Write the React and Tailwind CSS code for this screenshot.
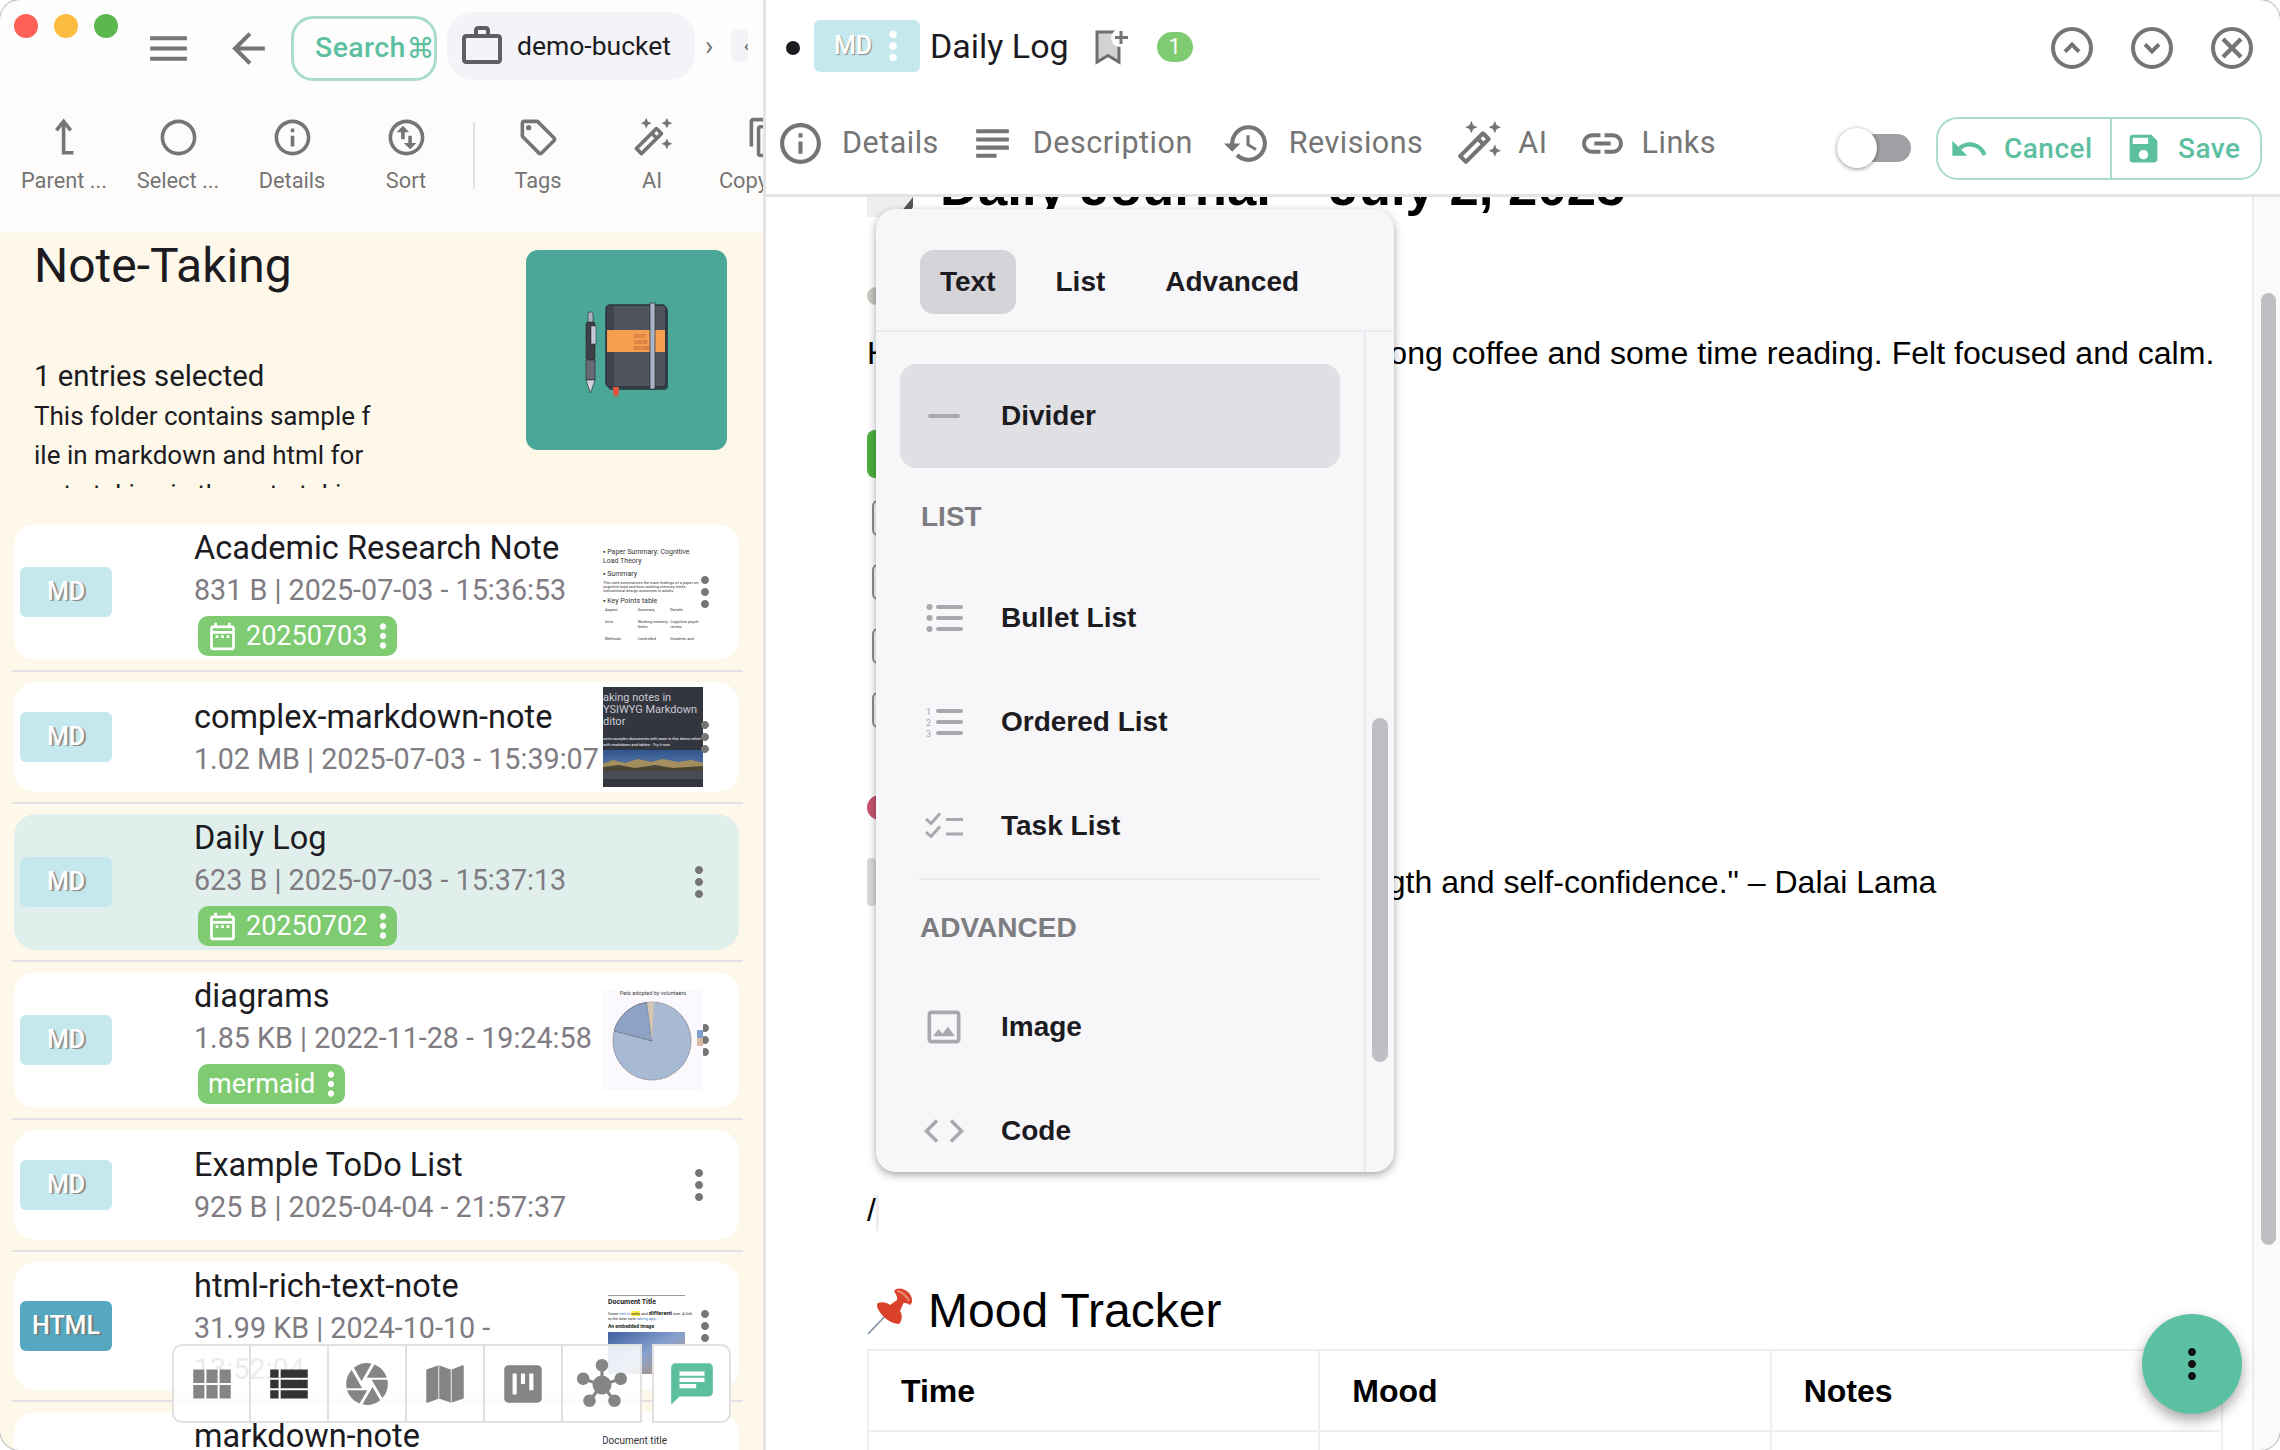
import {
  MdMenu,
  MdArrowBack,
  MdWorkOutline,
  MdRadioButtonUnchecked,
  MdInfoOutline,
  MdOutlineSwapVerticalCircle,
  MdOutlineLocalOffer,
  MdOutlineAutoFixHigh,
  MdContentCopy,
  MdMoreVert,
  MdOutlineDateRange,
  MdViewModule,
  MdViewList,
  MdCamera,
  MdViewKanban,
  MdHub,
  MdChat,
  MdOutlineSubject,
  MdHistory,
  MdLink,
  MdUndo,
  MdSave,
  MdOutlineImage,
} from "react-icons/md";

// little previews on the right of the list rows
function ThumbResearch() {
  return (
    <div className="w-[100px] h-[100px] bg-white overflow-hidden pt-[6px] text-[#333] text-[7px] leading-[9px]">
      <div>▪ Paper Summary: Cognitive Load Theory</div>
      <div className="mt-[4px]">▪ Summary</div>
      <div className="mt-[2px] text-[4px] leading-[4px]">
        This note summarizes the main findings of a paper on cognitive load and how working memory limits
        instructional design outcomes in adults.
      </div>
      <div className="mt-[4px]">▪ Key Points table</div>
      <div className="grid grid-cols-3 gap-y-[7px] mt-[1px] text-[4px] leading-[5px] pl-[2px]">
        <div>Aspect</div>
        <div>Summary</div>
        <div>Details</div>
        <div>Intro</div>
        <div>Working memory limits</div>
        <div>Cognitive psych review</div>
        <div>Methods</div>
        <div>Controlled experiment</div>
        <div>Students and design</div>
        <div>Results</div>
        <div>Reduced load helps</div>
        <div>Test scores rising</div>
      </div>
    </div>
  );
}

function ThumbWysiwyg() {
  return (
    <div className="w-[100px] h-[100px] bg-[#33353f] overflow-hidden text-[#c9cbd3] pt-[5px]">
      <div className="text-[11px] leading-[12px] whitespace-nowrap">aking notes in</div>
      <div className="text-[11px] leading-[12px] whitespace-nowrap">YSIWYG Markdown</div>
      <div className="text-[11px] leading-[12px] whitespace-nowrap">ditor</div>
      <div className="mt-[8px] text-[4px] leading-[6px] whitespace-nowrap text-white">
        write complex documents with ease in this demo editor
      </div>
      <div className="text-[4px] leading-[6px] whitespace-nowrap text-white">with markdown and tables - Try it now</div>
      <svg viewBox="0 0 100 29" className="block w-[100px] h-[29px] mt-[2px]">
        <defs>
          <linearGradient id="sky" x1="0" y1="0" x2="0" y2="1">
            <stop offset="0" stopColor="#2f5590" />
            <stop offset="1" stopColor="#7b8fae" />
          </linearGradient>
        </defs>
        <rect width="100" height="29" fill="url(#sky)" />
        <path d="M0 14 L10 10 L22 13 L35 9 L48 12 L60 9 L75 12 L88 10 L100 13 V22 H0Z" fill="#a58e5e" />
        <path d="M0 17 L16 15 L32 18 L52 15 L70 18 L100 16 V22 H0Z" fill="#4a4636" />
        <rect y="21" width="100" height="8" fill="#484c58" />
      </svg>
    </div>
  );
}

function ThumbPie() {
  return (
    <div className="w-[100px] h-[100px] bg-[#fbf9fd] overflow-hidden relative">
      <div className="text-[5.5px] leading-[7px] text-center text-[#444]">Pets adopted by volunteers</div>
      <svg viewBox="0 0 100 93" className="block w-[100px] h-[93px]">
        <circle cx="49" cy="44" r="39" fill="#a8b9d4" stroke="#333" strokeWidth="0.6" strokeDasharray="1.5 1" />
        <path d="M49 44 L11 34 A39 39 0 0 1 44 5.5Z" fill="#8ea2c6" stroke="#333" strokeWidth="0.6" strokeDasharray="1.5 1" />
        <path d="M49 44 L44 5.5 A39 39 0 0 1 51 5Z" fill="#d5c5b2" />
        <rect x="94" y="33" width="6" height="8" fill="#7f9fd0" />
        <rect x="94" y="41" width="6" height="8" fill="#d5b9a2" />
      </svg>
    </div>
  );
}

function ThumbDoc() {
  return (
    <div className="w-[100px] h-[100px] bg-white overflow-hidden pl-[5px] pr-[18px] pt-[19px] text-[#222]">
      <div className="border-t border-[#999] pt-[2px] text-[7px] leading-[9px] font-bold">Document Title</div>
      <div className="text-[4px] leading-[5px] mt-[3px] whitespace-nowrap">
        Some <span className="text-[#3a78c2]">text in</span> <span className="bg-[#ffe94d]">color</span> and{" "}
        <b className="text-[6px]">different</b> size. A link
      </div>
      <div className="text-[4px] leading-[5px] whitespace-nowrap">
        to the best note <span className="text-[#3a78c2]">taking app.</span>
      </div>
      <div className="text-[5px] leading-[7px] font-bold mt-[2px]">An embedded image</div>
      <div className="h-[42px] mt-[2px] bg-gradient-to-br from-[#3f5f9f] via-[#88a2cf] to-[#b98a5a]"></div>
    </div>
  );
}

function ThumbLast() {
  return <div className="w-[100px] h-[60px] self-start bg-white overflow-hidden text-[10px] leading-[14px] pt-[22px] whitespace-nowrap text-[#333] -indent-[1px]">Document title</div>;
}

const rows = [
  { name: "Academic Research Note", meta: "831 B | 2025-07-03 - 15:36:53", tag: "20250703", cal: true, box: "h-[136px] bg-white", text: "pt-[3px]", thumb: <ThumbResearch /> },
  { name: "complex-markdown-note", meta: "1.02 MB | 2025-07-03 - 15:39:07", box: "h-[110px] bg-white", text: "pt-[14px]", thumb: <ThumbWysiwyg /> },
  { name: "Daily Log", meta: "623 B | 2025-07-03 - 15:37:13", tag: "20250702", cal: true, box: "h-[136px] bg-[#e0efec]", text: "pt-[3px]" },
  { name: "diagrams", meta: "1.85 KB | 2022-11-28 - 19:24:58", tag: "mermaid", box: "h-[136px] bg-white", text: "pt-[3px]", thumb: <ThumbPie /> },
  { name: "Example ToDo List", meta: "925 B | 2025-04-04 - 21:57:37", box: "h-[110px] bg-white", text: "pt-[14px]" },
  { name: "html-rich-text-note", meta: "31.99 KB | 2024-10-10 - 13:52:04", kind: "HTML", box: "h-[128px] bg-white", text: "pt-[3px]", thumb: <ThumbDoc /> },
  { name: "markdown-note", meta: "", box: "h-[136px] bg-white", text: "pt-[3px]", thumb: <ThumbLast /> },
];

const toolbar = [
  { label: "Parent ...", icon: <ParentIcon /> },
  { label: "Select ...", icon: <MdRadioButtonUnchecked size={43} /> },
  { label: "Details", icon: <MdInfoOutline size={43} /> },
  { label: "Sort", icon: <MdOutlineSwapVerticalCircle size={43} /> },
];

function ParentIcon() {
  return (
    <svg viewBox="0 0 24 24" width="43" height="43" fill="none" stroke="currentColor" strokeWidth="2">
      <path d="M7.5 8 L11.5 3 L15.5 8" />
      <path d="M11.5 3.5 V20.5 H17" />
    </svg>
  );
}

function Row({ row }) {
  return (
    <>
      <div className={`ml-[14px] w-[725px] rounded-[22px] flex items-center overflow-hidden shrink-0 ${row.box}`}>
        <div
          className={
            row.kind === "HTML"
              ? "ml-[6px] w-[92px] h-[50px] rounded-[6px] bg-[#55a8bf] flex items-center justify-center text-white font-medium text-[25px] [text-shadow:2px_1px_1px_#777]"
              : "ml-[6px] w-[92px] h-[50px] rounded-[6px] bg-[#c5e8ee] flex items-center justify-center text-white font-medium text-[25px] [text-shadow:2px_1px_1px_#888]"
          }
        >
          {row.kind || "MD"}
        </div>
        <div className={`ml-[82px] w-[409px] self-start ${row.text}`}>
          <div className="text-[32.5px] leading-[43px] text-[#1c1b1f] whitespace-nowrap">{row.name}</div>
          <div className="text-[28.7px] leading-[41px] text-[#7f7c82]">{row.meta}</div>
          {row.tag && (
            <div className="ml-[4px] mt-[5px] inline-flex items-center h-[40px] pl-[10px] rounded-[10px] bg-[#7ecb72] text-white text-[27px]">
              {row.cal && <MdOutlineDateRange size={33} className="mr-[7px] -ml-[2px]" />}
              <span>{row.tag}</span>
              <MdMoreVert size={38} className="-ml-[3px] -mr-[5px]" />
            </div>
          )}
        </div>
        {row.thumb ? row.thumb : null}
        <MdMoreVert size={48} className={row.thumb ? "-ml-[22px] shrink-0 text-[#757575]" : "ml-[72px] shrink-0 text-[#757575]"} />
      </div>
      <div className="ml-[12px] w-[731px] h-[2px] my-[10px] bg-[#e2dfe5] shrink-0"></div>
    </>
  );
}

function NotebookArt() {
  return (
    <svg viewBox="0 0 201 200" className="block w-full h-full">
      <rect x="82" y="57" width="60" height="83" rx="4" fill="#2c4a4e" />
      <rect x="80" y="55" width="60" height="82" rx="4" fill="#50545e" stroke="#2c3138" strokeWidth="1.5" />
      <rect x="81" y="56" width="7" height="80" fill="#3f434c" />
      <rect x="81" y="80" width="58" height="22" fill="#f79d50" />
      <text x="108" y="88" fontSize="6" fontWeight="700" fill="#c9743a" fontFamily="Roboto, sans-serif">DOT</text>
      <text x="108" y="94" fontSize="6" fontWeight="700" fill="#c9743a" fontFamily="Roboto, sans-serif">GRID</text>
      <text x="108" y="100" fontSize="6" fontWeight="700" fill="#c9743a" fontFamily="Roboto, sans-serif">BOOK</text>
      <rect x="124" y="53" width="5" height="86" fill="#a9b4c6" stroke="#2c3138" strokeWidth="0.7" />
      <path d="M87 137 h6 v7 l-3 3 l-3 -3z" fill="#e0533c" />
      <rect x="62" y="62" width="5" height="14" rx="2" fill="#a9b4c6" stroke="#222" strokeWidth="0.6" />
      <rect x="60" y="72" width="9" height="38" rx="2" fill="#3e4048" stroke="#222" strokeWidth="0.6" />
      <rect x="65" y="76" width="5" height="18" fill="#c4cbd6" stroke="#222" strokeWidth="0.5" />
      <rect x="60" y="110" width="9" height="20" fill="#656a75" stroke="#222" strokeWidth="0.6" />
      <path d="M60 130 h9 l-4.5 13z" fill="#cfd6df" stroke="#222" strokeWidth="0.6" />
    </svg>
  );
}

function LeftPane() {
  return (
    <div className="relative w-[766px] h-full shrink-0 border-r-[3px] border-[#e4e3e6] overflow-hidden flex flex-col">
      {/* title bar */}
      <div className="h-[96px] shrink-0 flex items-start pl-[14px] bg-[#fefdfd] overflow-hidden">
        <div className="mt-[14px] flex gap-[16px] shrink-0">
          <div className="w-[24px] h-[24px] rounded-full bg-[#ff6058]"></div>
          <div className="w-[24px] h-[24px] rounded-full bg-[#fdbb40]"></div>
          <div className="w-[24px] h-[24px] rounded-full bg-[#5ab84c]"></div>
        </div>
        <MdMenu size={49} className="ml-[26px] mt-[24px] shrink-0 text-[#757575]" />
        <MdArrowBack size={49} className="ml-[31px] mt-[24px] shrink-0 text-[#757575]" />
        <div className="ml-[18px] mt-[16px] w-[146px] h-[65px] shrink-0 rounded-[22px] border-[3px] border-[#a9dccb] flex items-center pl-[21px] text-[#5cc0a0] text-[28.5px] tracking-[0.4px] font-medium whitespace-nowrap">
          Search<span className="font-['DejaVu_Sans',sans-serif] text-[28px] ml-[1px] -mr-[4px]">⌘</span>
        </div>
        <div className="ml-[10px] mt-[12px] w-[248px] h-[68px] shrink-0 rounded-[26px] bg-[#f4f3f7] flex items-center pl-[11px] text-[#1c1b1f] text-[26.5px]">
          <MdWorkOutline size={48} className="text-[#5f5e62] shrink-0" />
          <span className="ml-[11px]">demo-bucket</span>
        </div>
        <span className="ml-[10px] mt-[28px] text-[#757575] text-[28px] leading-[36px] shrink-0">›</span>
        <div className="ml-[18px] mt-[30px] w-[17px] h-[32px] shrink-0 rounded-l-[4px] bg-[#f4f3f7] flex items-center justify-end text-[#333] text-[14px]">‹</div>
      </div>

      {/* toolbar */}
      <div className="h-[137px] shrink-0 flex items-start pl-[7px] pt-[20px] bg-[#fefcfb] text-[#757575] overflow-hidden">
        {toolbar.map((t) => (
          <div key={t.label} className="w-[114px] shrink-0 flex flex-col items-center">
            <div className="h-[43px]">{t.icon}</div>
            <div className="mt-[8px] text-[21.8px] leading-[28px] whitespace-nowrap">{t.label}</div>
          </div>
        ))}
        <div className="ml-[10px] mt-[6px] w-[2px] h-[67px] bg-[#e2e1e4] shrink-0"></div>
        <div className="ml-[6px] w-[114px] shrink-0 flex flex-col items-center">
          <MdOutlineLocalOffer size={43} />
          <div className="mt-[8px] text-[21.8px] leading-[28px]">Tags</div>
        </div>
        <div className="w-[114px] shrink-0 flex flex-col items-center">
          <MdOutlineAutoFixHigh size={43} />
          <div className="mt-[8px] text-[21.8px] leading-[28px]">AI</div>
        </div>
        <div className="w-[116px] shrink-0 flex flex-col items-center">
          <MdContentCopy size={43} />
          <div className="mt-[8px] text-[21.8px] leading-[28px] whitespace-nowrap">Copy M ...</div>
        </div>
      </div>

      {/* folder info + list */}
      <div className="flex-1 bg-[#fef8ea] min-h-0 overflow-hidden">
        <div className="h-[291px] flex">
          <div className="w-[526px] pl-[34px] shrink-0">
            <div className="mt-[3px] text-[48px] leading-[60px] text-[#1c1b1f]">Note-Taking</div>
            <div className="mt-[60px] text-[29.3px] leading-[40px] text-[#1c1b1f]">1 entries selected</div>
            <div className="mt-[1px] h-[91px] overflow-hidden text-[26px] leading-[39px] text-[#1c1b1f] whitespace-nowrap">
              <div>This folder contains sample f</div>
              <div>ile in markdown and html for</div>
              <div>note-taking in the note-takin</div>
            </div>
          </div>
          <div className="mt-[17px] w-[201px] h-[200px] rounded-[12px] bg-[#4ba898] overflow-hidden shrink-0">
            <NotebookArt />
          </div>
        </div>
        {rows.map((r) => (
          <Row key={r.name} row={r} />
        ))}
      </div>

      {/* view switcher over the list */}
      <div className="absolute left-[172px] top-[1344px] flex">
        <div className="flex h-[79px] border-2 border-[#e0e0e0] rounded-l-[10px] bg-white/85 divide-x-2 divide-[#e0e0e0]">
          <div className="w-[77px] flex items-center justify-center text-[#858585]"><MdViewModule size={50} /></div>
          <div className="w-[78px] flex items-center justify-center text-[#333333]"><MdViewList size={50} /></div>
          <div className="w-[78px] flex items-center justify-center text-[#858585]"><MdCamera size={50} /></div>
          <div className="w-[78px] flex items-center justify-center text-[#858585]">
            <svg viewBox="0 0 24 24" width="50" height="50">
              <path d="M20.5 3l-.16.03L15 5.1 9 3 3.36 4.9c-.21.07-.36.25-.36.48V20.5c0 .28.22.5.5.5l.16-.03L9 18.9l6 2.1 5.64-1.9c.21-.07.36-.25.36-.48V3.5c0-.28-.22-.5-.5-.5z" fill="currentColor" />
              <path d="M9 3v16M15 5v16" stroke="#ffffff" strokeWidth="0.4" />
            </svg>
          </div>
          <div className="w-[78px] flex items-center justify-center text-[#858585]"><MdViewKanban size={50} /></div>
          <div className="w-[77px] flex items-center justify-center text-[#858585]"><MdHub size={50} /></div>
        </div>
        <div className="ml-[10px] w-[79px] h-[79px] border-2 border-[#e0e0e0] rounded-r-[10px] bg-white flex items-center justify-center text-[#5cc0a0]">
          <MdChat size={50} />
        </div>
      </div>
    </div>
  );
}

function CircleIcon({ d, sw }) {
  return (
    <svg viewBox="0 0 24 24" width="48" height="48" fill="none" stroke="#757575" strokeWidth="2">
      <circle cx="12" cy="12" r="9.5" />
      <path d={d} strokeWidth={sw || 2} />
    </svg>
  );
}

function SlashMenu() {
  const itemCls = "h-[104px] flex items-center rounded-[16px]";
  const iconCls = "ml-[22px] w-[44px] flex items-center justify-center shrink-0";
  return (
    <div className="absolute left-[110px] top-[209px] w-[518px] h-[963px] rounded-[20px] bg-[#f7f6f9] shadow-[0_3px_8px_rgba(0,0,0,0.35)] overflow-hidden flex flex-col text-[28px] font-bold text-[#1c1b1f] font-['Liberation_Sans',Arial,sans-serif]">
      <div className="h-[123px] shrink-0 border-b-2 border-[#ebeaee] flex items-start pl-[44px] pt-[41px] gap-[20px]">
        <div className="h-[64px] px-[20px] rounded-[14px] bg-[#d5d4d8] flex items-center">Text</div>
        <div className="h-[64px] px-[20px] flex items-center">List</div>
        <div className="h-[64px] px-[20px] flex items-center">Advanced</div>
      </div>
      <div className="flex-1 min-h-0 flex">
        <div className="w-[490px] shrink-0 border-r-2 border-[#ebeaee] pl-[24px] pt-[32px]">
          <div className="w-[440px]">
            <div className={`${itemCls} bg-[#e0dfe3]`}>
              <div className={iconCls}><div className="w-[32px] h-[4px] rounded-full bg-[#ababae]"></div></div>
              <span className="ml-[35px]">Divider</span>
            </div>
            <div className="h-[98px] flex items-center pl-[21px] text-[#7d7c80]">LIST</div>
            <div className={itemCls}>
              <div className={iconCls}>
                <svg viewBox="0 0 37 28" width="37" height="28" fill="#a9a8ac">
                  <circle cx="3.5" cy="3" r="3" /><circle cx="3.5" cy="14" r="3" /><circle cx="3.5" cy="25" r="3" />
                  <rect x="10" y="1" width="27" height="4" rx="2" /><rect x="10" y="12" width="27" height="4" rx="2" /><rect x="10" y="23" width="27" height="4" rx="2" />
                </svg>
              </div>
              <span className="ml-[35px]">Bullet List</span>
            </div>
            <div className={itemCls}>
              <div className={iconCls}>
                <svg viewBox="0 0 37 32" width="37" height="32" fill="#a9a8ac">
                  <text x="0" y="9" fontSize="9" fontWeight="400" fontFamily="Roboto, sans-serif">1</text>
                  <text x="0" y="20" fontSize="9" fontWeight="400" fontFamily="Roboto, sans-serif">2</text>
                  <text x="0" y="31" fontSize="9" fontWeight="400" fontFamily="Roboto, sans-serif">3</text>
                  <rect x="10" y="3" width="27" height="4" rx="2" /><rect x="10" y="14" width="27" height="4" rx="2" /><rect x="10" y="25" width="27" height="4" rx="2" />
                </svg>
              </div>
              <span className="ml-[35px]">Ordered List</span>
            </div>
            <div className={itemCls}>
              <div className={iconCls}>
                <svg viewBox="0 0 38 28" width="38" height="28" fill="none" stroke="#a9a8ac" strokeWidth="3">
                  <path d="M1 7 L6 11.5 L15 1.5" /><path d="M1 20 L6 24.5 L15 14.5" />
                  <path d="M21 7.5 H38" /><path d="M21 22 H38" />
                </svg>
              </div>
              <span className="ml-[35px]">Task List</span>
            </div>
            <div className="ml-[19px] w-[401px] h-[2px] bg-[#ebeaee]"></div>
            <div className="h-[95px] flex items-center pl-[20px] text-[#7d7c80]">ADVANCED</div>
            <div className={itemCls}>
              <div className={iconCls}><MdOutlineImage size={44} className="text-[#a9a8ac]" /></div>
              <span className="ml-[35px]">Image</span>
            </div>
            <div className={itemCls}>
              <div className={iconCls}>
                <svg viewBox="0 0 40 24" width="40" height="24" fill="none" stroke="#a9a8ac" strokeWidth="3.5">
                  <path d="M13 1.5 L2.5 12 L13 22.5" /><path d="M27 1.5 L37.5 12 L27 22.5" />
                </svg>
              </div>
              <span className="ml-[35px]">Code</span>
            </div>
          </div>
        </div>
        <div className="flex-1 pl-[6px]">
          <div className="mt-[386px] w-[16px] h-[344px] rounded-full bg-[#c0bec2]"></div>
        </div>
      </div>
    </div>
  );
}

function PinEmoji() {
  return (
    <svg viewBox="0 0 46 46" width="46" height="46" className="shrink-0">
      <path d="M1 46 L21 25" stroke="#7d8fa8" strokeWidth="1.6" />
      <path d="M27 3 C30 -1 37 0 42 5 C46 10 46 15 43 17 C40 15 37 14 36 16 L33 23 C36 27 35 33 32 36 C27 36 19 32 15 27 C10 21 9 17 11 15 C16 13 21 15 23 17 L30 12 C31 10 29 6 27 3Z" fill="#d9412b" />
      <path d="M30 3 C34 3 40 8 42 13" stroke="#f08a70" strokeWidth="2" fill="none" />
    </svg>
  );
}

function Editor() {
  return (
    <div className="flex-1 min-h-0 flex overflow-hidden font-['Liberation_Sans',Arial,sans-serif] text-black">
      <div className="flex-1 min-w-0 pl-[101px]">
        <div className="-mt-[40px] h-[60px] flex items-center whitespace-nowrap text-[52.7px] leading-[60px] font-bold">
          <svg viewBox="0 0 46 60" width="46" height="60" className="shrink-0 mr-[27px]">
            <rect width="46" height="60" fill="#efeeec" />
            <path d="M46 40 L30 60 H38 L46 50Z" fill="#555555" />
          </svg>
          Daily Journal – July 2, 2025
        </div>
        <div className="mt-[70px] h-[18px] w-[18px] rounded-full bg-[#c9c7c1]"></div>
        <div className="mt-[26px] text-[32.1px] leading-[44px] whitespace-nowrap">
          Had a slow start this morning with a long coffee and some time reading. Felt focused and calm.
        </div>
        <div className="mt-[55px] w-[46px] h-[48px] rounded-[8px] bg-[#4caf3f]"></div>
        <div className="mt-[22px] ml-[5px] w-[36px] h-[36px] rounded-[6px] border-2 border-[#8d8d8d]"></div>
        <div className="mt-[28px] ml-[5px] w-[36px] h-[36px] rounded-[6px] border-2 border-[#8d8d8d]"></div>
        <div className="mt-[28px] ml-[5px] w-[36px] h-[36px] rounded-[6px] border-2 border-[#8d8d8d]"></div>
        <div className="mt-[28px] ml-[5px] w-[36px] h-[36px] rounded-[6px] border-2 border-[#8d8d8d]"></div>
        <div className="mt-[67px] w-[30px] h-[25px] rounded-full bg-[#c5556e]"></div>
        <div className="mt-[38px] h-[48px] flex">
          <div className="w-[9px] h-[48px] rounded-[4px] bg-[#d9d9d9] shrink-0"></div>
          <div className="pl-[70px] text-[32px] leading-[48px] whitespace-nowrap">
            "A calm mind brings inner strength and self-confidence." – Dalai Lama
          </div>
        </div>
        <div className="mt-[282px] h-[44px] text-[32px] leading-[44px]">
          /<span className="inline-block align-middle w-[3px] h-[36px] bg-[#eeeeee]"></span>
        </div>
        <div className="mt-[49px] h-[60px] flex items-center gap-[15px] text-[48px] leading-[60px]">
          <PinEmoji />
          Mood Tracker
        </div>
        <div className="mt-[8px] w-[1356px] grid grid-cols-3 border-t-2 border-l-2 border-[#eeeeee] text-[32px] font-bold">
          <div className="h-[81px] border-r-2 border-b-2 border-[#eeeeee] flex items-center pl-[32px]">Time</div>
          <div className="h-[81px] border-r-2 border-b-2 border-[#eeeeee] flex items-center pl-[32px]">Mood</div>
          <div className="h-[81px] border-r-2 border-b-2 border-[#eeeeee] flex items-center pl-[32px]">Notes</div>
          <div className="h-[81px] border-r-2 border-[#eeeeee]"></div>
          <div className="h-[81px] border-r-2 border-[#eeeeee]"></div>
          <div className="h-[81px] border-r-2 border-[#eeeeee]"></div>
        </div>
      </div>
      {/* page scrollbar */}
      <div className="w-[28px] shrink-0 border-l-2 border-[#eeedf0] bg-[#fafafa] pl-[7px]">
        <div className="mt-[96px] w-[15px] h-[952px] rounded-full bg-[#c0bec2]"></div>
      </div>
    </div>
  );
}

function RightPane() {
  return (
    <div className="relative flex-1 min-w-0 h-full bg-white flex flex-col">
      <div className="h-[96px] shrink-0 flex items-center pr-[24px] text-[#1c1b1f]">
        <div className="ml-[20px] w-[14px] h-[14px] rounded-full bg-[#1c1b1f] shrink-0"></div>
        <div className="ml-[14px] -mt-[4px] w-[106px] h-[52px] rounded-[6px] bg-[#c5e8ee] flex items-center pl-[20px] text-white font-medium text-[25px] [text-shadow:1px_1px_1px_#888] shrink-0">
          MD
          <MdMoreVert size={46} className="text-white -ml-[2px]" />
        </div>
        <span className="ml-[10px] -mt-[4px] text-[34px]">Daily Log</span>
        <svg viewBox="0 0 34 36" width="34" height="36" className="ml-[26px] -mt-[3px] shrink-0">
          <path d="M2 3 H24 V33 L13 26.5 L2 33Z" fill="#d2d1d4" stroke="#6f6f6f" strokeWidth="3" />
          <circle cx="25" cy="9" r="9" fill="#ffffff" />
          <path d="M26 2v13 M20 8.5h13" stroke="#757575" strokeWidth="3" />
        </svg>
        <div className="ml-[28px] -mt-[3px] w-[36px] h-[30px] rounded-full bg-[#7ecb72] text-white text-[22px] flex items-center justify-center shrink-0">1</div>
        <div className="ml-auto flex gap-[32px] shrink-0">
          <CircleIcon d="M8.5 13.8 L12 10.3 L15.5 13.8" />
          <CircleIcon d="M8.5 10.2 L12 13.7 L15.5 10.2" />
          <CircleIcon d="M7.5 7.5 L16.5 16.5 M16.5 7.5 L7.5 16.5" sw={2.2} />
        </div>
      </div>

      <div className="h-[101px] shrink-0 border-b-[3px] border-[#e4e3e6] flex items-center pr-[18px] text-[#757575] text-[30.5px] tracking-[0.5px] bg-white z-10">
        <MdInfoOutline size={49} className="ml-[10px] -mt-[4px] shrink-0" />
        <span className="ml-[17px] -mt-[4px]">Details</span>
        <MdOutlineSubject size={49} className="ml-[29px] -mt-[4px] shrink-0" />
        <span className="ml-[16px] -mt-[4px]">Description</span>
        <MdHistory size={49} className="ml-[29px] -mt-[4px] shrink-0" />
        <span className="ml-[18px] -mt-[4px]">Revisions</span>
        <MdOutlineAutoFixHigh size={49} className="ml-[31px] -mt-[4px] shrink-0" />
        <span className="ml-[15px] -mt-[4px]">AI</span>
        <MdLink size={49} className="ml-[30px] -mt-[4px] shrink-0" />
        <span className="ml-[15px] -mt-[4px]">Links</span>

        <div className="relative ml-auto mt-[6px] w-[74px] h-[40px] flex items-center shrink-0">
          <div className="ml-[23px] w-[51px] h-[28px] rounded-full bg-[#a19fa4]"></div>
          <div className="absolute left-0 top-0 w-[40px] h-[40px] rounded-full bg-white shadow-[0_1px_4px_rgba(0,0,0,0.45)]"></div>
        </div>
        <div className="ml-[25px] mt-[7px] w-[326px] h-[63px] shrink-0 rounded-[22px] border-2 border-[#a9dccb] flex text-[#5cc0a0] text-[28px] font-medium">
          <div className="w-[174px] border-r-2 border-[#a9dccb] flex items-center pl-[11px]">
            <MdUndo size={40} className="shrink-0" />
            <span className="ml-[15px]">Cancel</span>
          </div>
          <div className="flex-1 flex items-center pl-[13px]">
            <MdSave size={37} className="shrink-0" />
            <span className="ml-[16px]">Save</span>
          </div>
        </div>
      </div>

      <Editor />
      <SlashMenu />

      {/* floating actions */}
      <div className="absolute left-[1376px] top-[1314px] w-[100px] h-[100px] rounded-full bg-[#5cc1a3] shadow-[0_6px_14px_rgba(0,0,0,0.35)] flex items-center justify-center text-[#111]">
        <MdMoreVert size={48} />
      </div>
    </div>
  );
}

export default function App() {
  return (
    <div className="relative w-[2280px] h-[1450px] overflow-hidden bg-white flex font-[Roboto,sans-serif]">
      <LeftPane />
      <RightPane />
      {/* window corners */}
      <div className="absolute inset-0 pointer-events-none rounded-[20px] shadow-[0_0_0_1px_#b5b5b5,0_0_0_30px_#ffffff] z-20"></div>
    </div>
  );
}
